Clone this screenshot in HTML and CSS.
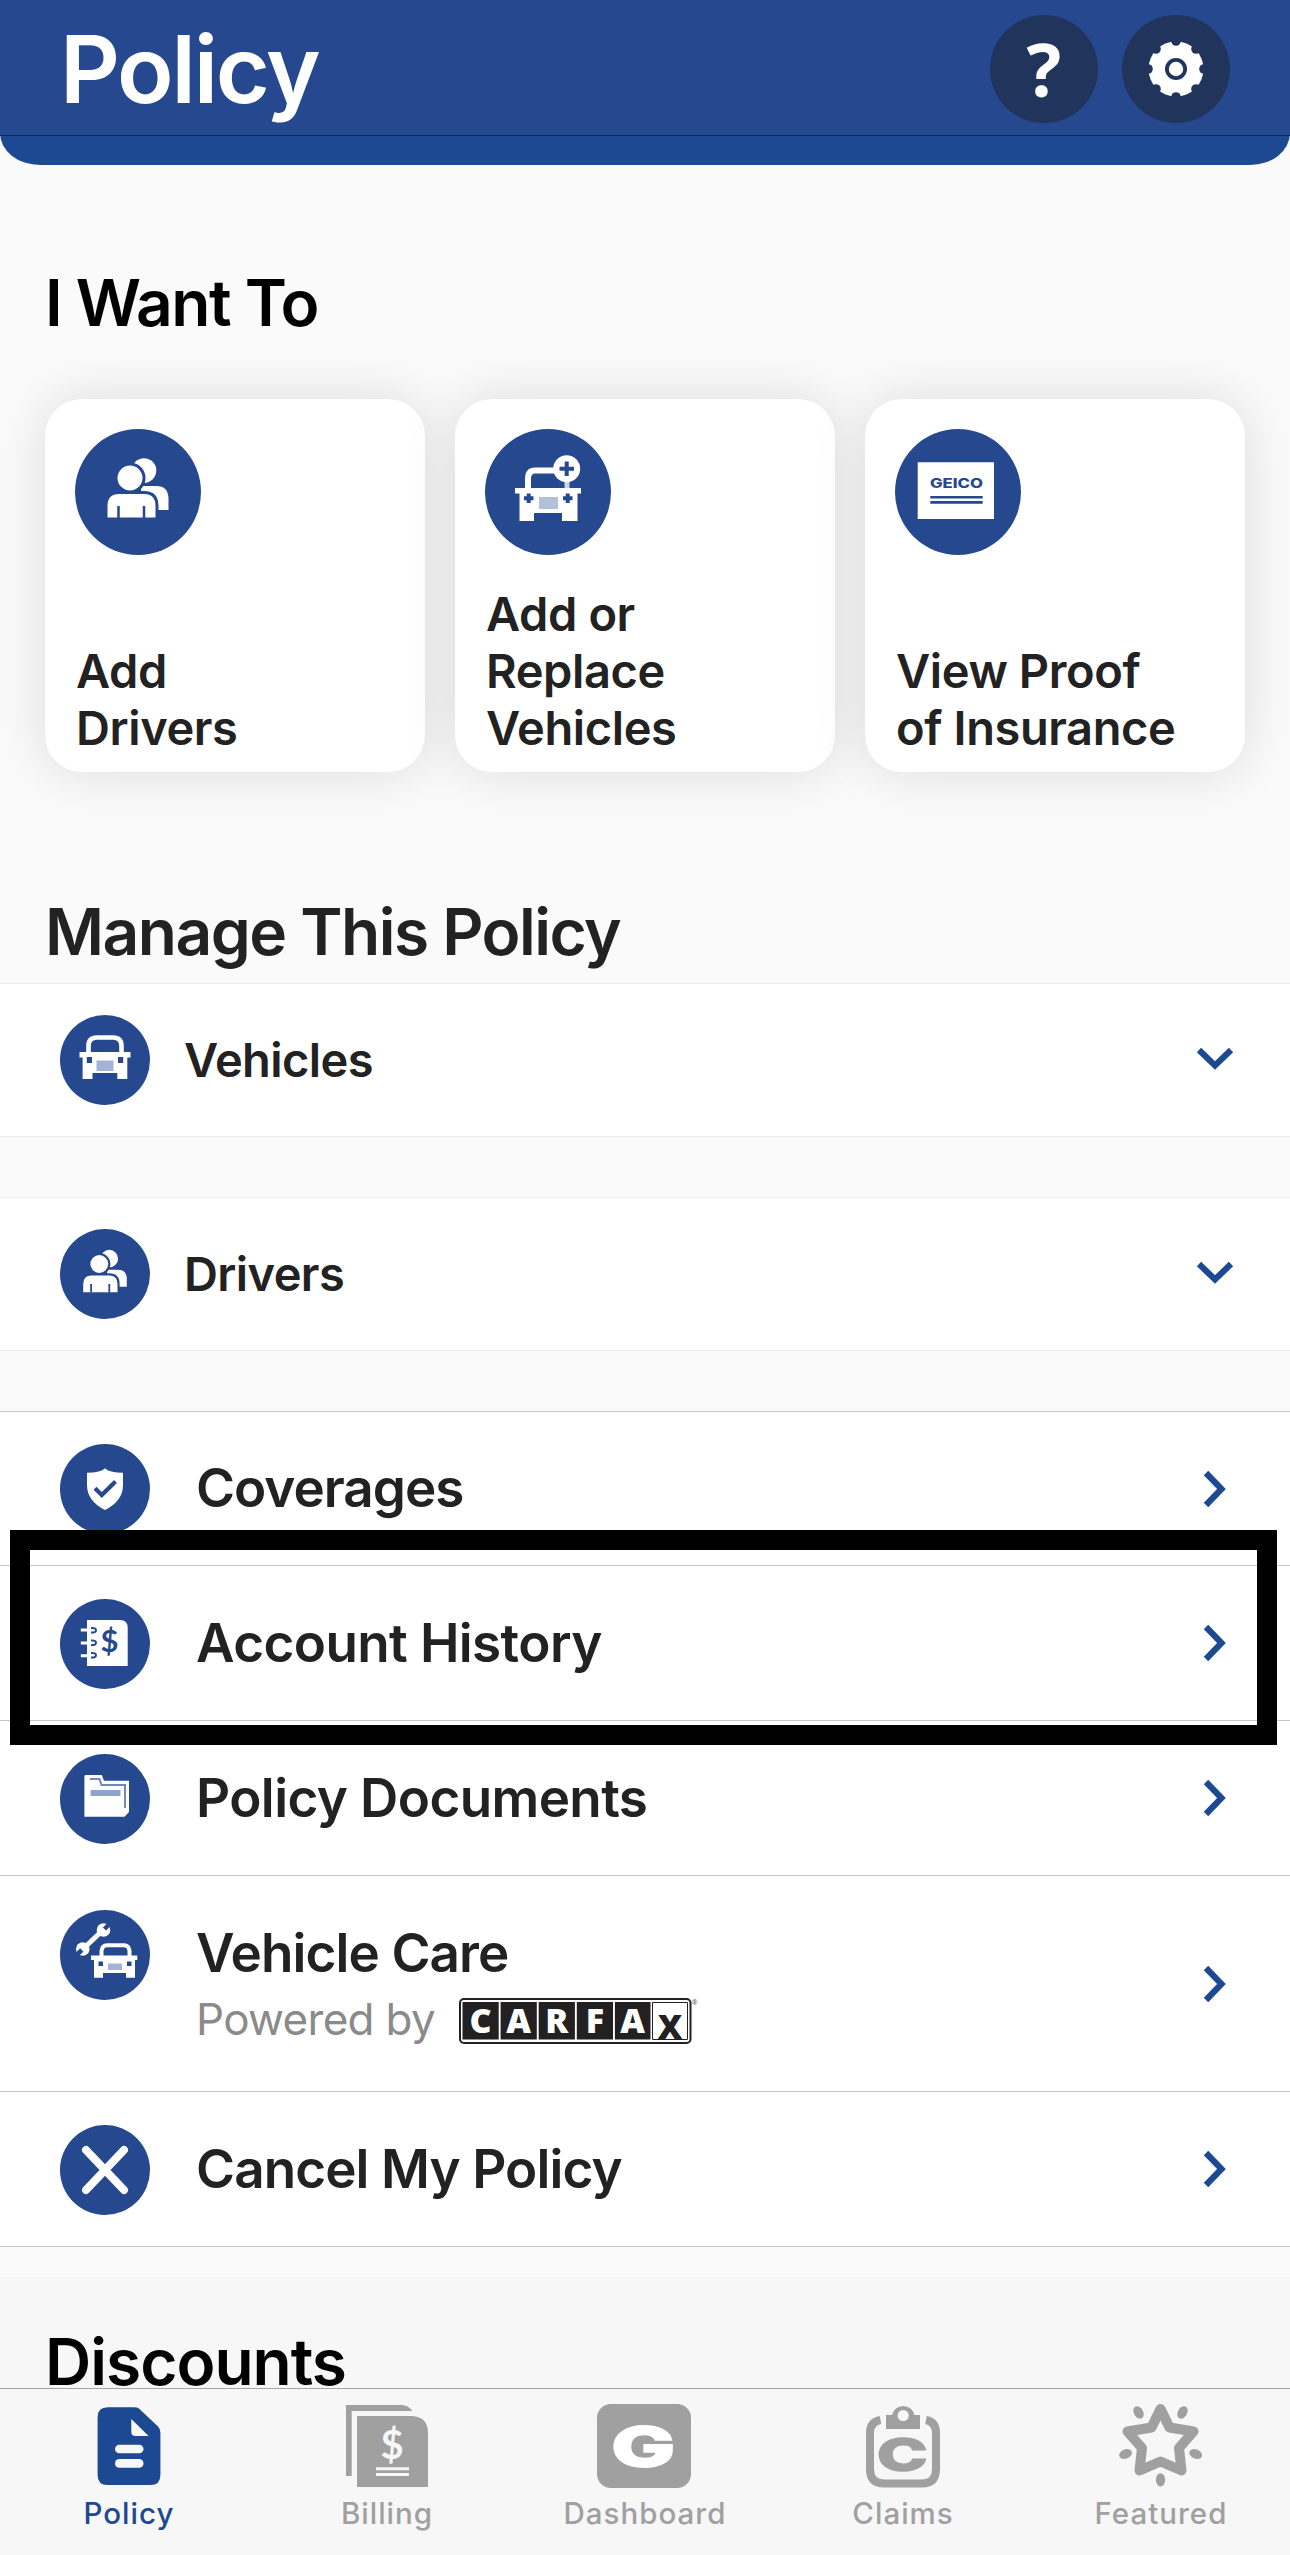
FILE: index.html
```html
<!DOCTYPE html>
<html lang="en">
<head>
<meta charset="utf-8">
<title>Policy</title>
<link rel="stylesheet" href="styles.css">
</head>
<body>
<svg class="defs" width="0" height="0" aria-hidden="true">
  <symbol id="people" viewBox="0 0 126 126">
    <circle cx="63" cy="63" r="63" fill="#25488e"/>
    <circle cx="69" cy="41.500" r="12.300" fill="#fff"/>
    <path d="M66 57H81Q93.500 57 93.500 70V81H66Z" fill="#fff"/>
    <circle cx="55" cy="49" r="14" fill="#fff" stroke="#25488e" stroke-width="3"/>
    <path d="M31 90V77Q31 63.500 44 63.500H69Q82 63.500 82 77V90Z" fill="#fff" stroke="#25488e" stroke-width="3"/>
    <path d="M43.500 77V89M69 77V89" stroke="#25488e" stroke-width="2.500"/>
  </symbol>
  <symbol id="chevron-down" viewBox="0 0 38 24"><path d="M3 3 19 18.500 35 3" fill="none" stroke="#1d4992" stroke-width="6.200"/></symbol>
  <symbol id="chevron-right" viewBox="0 0 24 38"><path d="M3 3 18.500 19 3 35" fill="none" stroke="#1d4992" stroke-width="6.200"/></symbol>
</svg>

<header class="header">
  <div class="header-bar">
    <h1 class="title">Policy</h1>
    <button class="round-button help" aria-label="Help">?</button>
    <button class="round-button" aria-label="Settings">
      <svg width="60" height="60" viewBox="-30 -30 60 60">
        <circle r="27.500" fill="#fff"/>
        <g fill="#20345c">
          <circle cx="28" r="4.800"/><circle cx="-28" r="4.800"/><circle cy="28" r="4.800"/><circle cy="-28" r="4.800"/>
          <circle cx="20" cy="20" r="4.800"/><circle cx="-20" cy="20" r="4.800"/><circle cx="20" cy="-20" r="4.800"/><circle cx="-20" cy="-20" r="4.800"/>
          <circle r="11"/>
        </g>
        <circle r="7.200" fill="#fff"/>
      </svg>
    </button>
  </div>
</header>

<main class="content">
  <h2 class="heading heading-want">I Want To</h2>
  <div class="cards">
    <a class="card">
      <svg width="126" height="126"><use href="#people"/></svg>
      <span class="card-label">Add<br>Drivers</span>
    </a>
    <a class="card">
      <svg width="126" height="126" viewBox="0 0 126 126">
        <circle cx="63" cy="63" r="63" fill="#25488e"/>
        <path d="M43 61V50Q43 41.500 50 41.500H69" fill="none" stroke="#fff" stroke-width="6"/>
        <path d="M82 52V60" stroke="#cdd6e8" stroke-width="5"/>
        <circle cx="81.700" cy="39.700" r="13.500" fill="#fff"/>
        <path d="M81.700 32.500V47M74.500 39.700H89" stroke="#25488e" stroke-width="4"/>
        <path d="M30 59H96V64.500H92.500V92H77V84H49V92H34.500V64.500H30Z" fill="#fff"/>
        <path d="M43.700 64.500V74M39 69.300H48.500M82.700 64.500V74M78 69.300H87.500" stroke="#25488e" stroke-width="4"/>
        <path d="M54 68H73V80H54Z" fill="#b3c0dc"/>
      </svg>
      <span class="card-label">Add or<br>Replace<br>Vehicles</span>
    </a>
    <a class="card">
      <svg width="126" height="126" viewBox="0 0 126 126">
        <circle cx="63" cy="63" r="63" fill="#25488e"/>
        <path d="M22.700 33.300H99V90H22.700Z" fill="#fff"/>
        <text class="geico" x="35" y="59.200" textLength="53" lengthAdjust="spacingAndGlyphs">GEICO</text>
        <path d="M35.300 68.300H87.700M35.300 73.400H87.700" stroke="#25488e" stroke-width="2.600"/>
      </svg>
      <span class="card-label">View Proof<br>of Insurance</span>
    </a>
  </div>

  <h2 class="heading heading-manage">Manage This Policy</h2>
  <div class="accordion">
    <svg width="90" height="90" viewBox="0 0 90 90">
      <circle cx="45" cy="45" r="45" fill="#25488e"/>
      <path d="M28.500 39V31Q28.500 22.500 37 22.500H53Q61.500 22.500 61.500 31V39" fill="none" stroke="#fff" stroke-width="4.600"/>
      <path d="M19.500 37H70.500V42.500H67.300V64H57.300V58H32.500V64H22.600V42.500H19.500Z" fill="#fff"/>
      <path d="M26.800 42H32V48H26.800ZM58 42H63.200V48H58Z" fill="#25488e"/>
      <path d="M36.500 45.500H53.500V56H36.500Z" fill="#a3b3d5"/>
    </svg>
    <span class="accordion-label">Vehicles</span>
    <svg width="38" height="24"><use href="#chevron-down"/></svg>
  </div>
  <div class="accordion">
    <svg width="90" height="90"><use href="#people"/></svg>
    <span class="accordion-label">Drivers</span>
    <svg width="38" height="24"><use href="#chevron-down"/></svg>
  </div>

  <div class="list">
    <a class="row row-first">
      <svg width="90" height="90" viewBox="0 0 90 90">
        <circle cx="45" cy="45" r="45" fill="#25488e"/>
        <path d="M45 24.300Q49 28.700 63 28.700V41Q63 57 45 66Q27 57 27 41V28.700Q41 28.700 45 24.300Z" fill="#fff"/>
        <path d="M35 44.300 41.800 51 55.500 37.500" fill="none" stroke="#25488e" stroke-width="4.200"/>
      </svg>
      <span class="row-label">Coverages</span>
      <svg width="24" height="38"><use href="#chevron-right"/></svg>
    </a>
    <a class="row row-marked">
      <svg width="90" height="90" viewBox="0 0 90 90">
        <circle cx="45" cy="45" r="45" fill="#25488e"/>
        <path d="M27 21H60Q67.700 21 67.700 29V67H27Z" fill="#fff"/>
        <path d="M20.800 31H29M20.800 44H29M20.800 56.700H29" stroke="#fff" stroke-width="3"/>
        <path d="M31 29Q36 28.500 36 31.200T31 33.500M31 41.500Q36 41 36 43.700T31 46M31 54Q36 53.500 36 56.200T31 58.500" fill="none" stroke="#25488e" stroke-width="2"/>
        <text class="dollar" x="49.500" y="53" font-size="31" fill="#25488e">$</text>
      </svg>
      <span class="row-label">Account History</span>
      <svg width="24" height="38"><use href="#chevron-right"/></svg>
    </a>
    <a class="row">
      <svg width="90" height="90" viewBox="0 0 90 90">
        <circle cx="45" cy="45" r="45" fill="#25488e"/>
        <path d="M24.400 22Q24.400 21 26 21H41.800L44 26.700H69V58L64.500 62.700H24.400Z" fill="#fff"/>
        <path d="M30 25H39.500L41.500 31H65V54" fill="none" stroke="#6f88be" stroke-width="2"/>
        <path d="M30.600 36H60.500V42H30.600Z" fill="#8fa3cf"/>
      </svg>
      <span class="row-label">Policy Documents</span>
      <svg width="24" height="38"><use href="#chevron-right"/></svg>
    </a>
    <a class="row row-care">
      <svg width="90" height="90" viewBox="0 0 90 90">
        <circle cx="45" cy="45" r="45" fill="#25488e"/>
        <path d="M23 39 43 20" stroke="#fff" stroke-width="5"/>
        <circle cx="43.500" cy="20" r="6.800" fill="#fff"/><circle cx="22.800" cy="39" r="6.800" fill="#fff"/>
        <path d="M44.500 19 51 12.500M21.800 40 15 46.500" stroke="#25488e" stroke-width="4.500"/>
        <path d="M41.500 47V41Q42 35.300 47 35.300H64Q69 35.300 69.500 41V47" fill="none" stroke="#fff" stroke-width="4"/>
        <path d="M31 45.500H77.300V50H75V67.700H66V63H43V67.700H34V50H31Z" fill="#fff"/>
        <path d="M38.500 51.500H43V56H38.500ZM67 51.500H71.500V56H67Z" fill="#25488e"/>
        <path d="M48 53.500H62V60H48Z" fill="#a3b3d5"/>
      </svg>
      <span class="row-text">
        <span class="row-label">Vehicle Care</span>
        <span class="row-sub"><span class="powered">Powered by</span>
          <svg class="carfax-logo" width="250" height="46" viewBox="0 0 250 46">
            <rect x="1" y="1" width="230.500" height="44" rx="4" fill="#fff" stroke="#222021" stroke-width="2"/>
            <path d="M3.500 4H39.700V41.500H3.500ZM41.600 4H77.800V41.500H41.600ZM79.700 4H115.900V41.500H79.700ZM117.800 4H154V41.500H117.800ZM155.900 4H191.500V41.500H155.900Z" fill="#222021"/>
            <path d="M193.500 4.500H228.500V41.500H193.500Z" fill="#fff" stroke="#222021"/>
            <g class="carfax"><text x="21.600" y="35">C</text><text x="59.700" y="35">A</text><text x="97.800" y="35">R</text><text x="136" y="35">F</text><text x="173.700" y="35">A</text><text class="carfax-x" x="211" y="41">X</text></g>
            <text x="233" y="7" font-size="7.500" font-family="Liberation Sans, sans-serif" fill="#333">®</text>
          </svg>
        </span>
      </span>
      <svg class="care-chevron" width="24" height="38"><use href="#chevron-right"/></svg>
    </a>
    <a class="row row-last">
      <svg width="90" height="90" viewBox="0 0 90 90">
        <circle cx="45" cy="45" r="45" fill="#25488e"/>
        <path d="M26 25 64 65M64 25 26 65" stroke="#fff" stroke-width="8" stroke-linecap="round"/>
      </svg>
      <span class="row-label">Cancel My Policy</span>
      <svg width="24" height="38"><use href="#chevron-right"/></svg>
    </a>
  </div>

  <section class="discounts"><h2 class="heading heading-discounts">Discounts</h2></section>
</main>

<nav class="tabs">
  <a class="tab tab-active">
    <svg width="84" height="84" viewBox="0 0 84 84">
      <path d="M20.600 3.300H48Q51 3.300 53 5.500L71 22.500Q73.400 25 73.400 28.500V71Q73.400 81 63.400 81H20.600Q10.600 81 10.600 71V13.300Q10.600 3.300 20.600 3.300Z" fill="#1d4992"/>
      <path d="M44.300 15 61.600 32H48.500Q44.300 32 44.300 28Z" fill="#f8f8f8"/>
      <rect x="28" y="40.700" width="28.500" height="8.600" rx="4.300" fill="#f8f8f8"/><rect x="28" y="55" width="28.500" height="8.800" rx="4.300" fill="#f8f8f8"/>
    </svg>
    <span>Policy</span>
  </a>
  <a class="tab">
    <svg width="84" height="84" viewBox="0 0 84 84">
      <path d="M1 1H57Q63 1 67.500 7H6.700V72H1Z" fill="#a0a0a0"/>
      <path d="M12 12H67Q83 13 83 29V83H12Z" fill="#a0a0a0"/>
      <text class="dollar" x="47.500" y="55" font-size="40" fill="#f7f7f7">$</text>
      <path d="M31 64.800H64M31 70.500H64" stroke="#f7f7f7" stroke-width="3"/>
    </svg>
    <span>Billing</span>
  </a>
  <a class="tab">
    <svg class="dashboard-icon" width="94" height="84" viewBox="0 0 94 84">
      <rect width="94" height="84" rx="14" fill="#a0a0a0"/>
      <text class="wide" x="14.500" y="61.500" font-size="54" fill="#fff" stroke="#fff" stroke-width="2" textLength="65" lengthAdjust="spacingAndGlyphs">G</text>
    </svg>
    <span>Dashboard</span>
  </a>
  <a class="tab">
    <svg width="84" height="84" viewBox="0 0 84 84">
      <path d="M19.500 16Q9 18 9 29V65Q9 79.500 23 79.500H61Q75 79.500 75 65V29Q75 18 65 16" fill="none" stroke="#a0a0a0" stroke-width="8"/>
      <path d="M25 11H31A11.500 11.500 0 0 1 53.500 11H59V25H25Z" fill="#a0a0a0"/>
      <circle cx="42.200" cy="11.500" r="5.600" fill="#f8f8f8"/>
      <text class="wide" x="16" y="67" font-size="45" fill="#a0a0a0" stroke="#a0a0a0" stroke-width="1.500" textLength="52" lengthAdjust="spacingAndGlyphs">C</text>
    </svg>
    <span>Claims</span>
  </a>
  <a class="tab">
    <svg width="84" height="84" viewBox="0 0 84 84">
      <path d="M41.500 5 50.500 23.500 74.500 27.500 60 44 62.500 66.500 41.500 57.500 20.500 66.500 23 44 8.500 27.500 32.500 23.500Z" fill="none" stroke="#a0a0a0" stroke-width="10" stroke-linejoin="round"/>
      <g fill="#a0a0a0">
        <ellipse cx="19.500" cy="8.500" rx="4.700" ry="6.600" transform="rotate(-30 19.500 8.500)"/>
        <ellipse cx="63.500" cy="8.500" rx="4.700" ry="6.600" transform="rotate(30 63.500 8.500)"/>
        <ellipse cx="6.600" cy="50" rx="6.600" ry="4.700" transform="rotate(-22 6.600 50)"/>
        <ellipse cx="76.700" cy="50" rx="6.600" ry="4.700" transform="rotate(22 76.700 50)"/>
        <ellipse cx="41.500" cy="75.800" rx="4.700" ry="6.600"/>
      </g>
    </svg>
    <span>Featured</span>
  </a>
</nav>
</body>
</html>
```
FILE: styles.css
```css
*, ::before, ::after { box-sizing: border-box; }

body {
  margin: 0;
  width: 1290px;
  height: 2555px;
  overflow: hidden;
  display: flex;
  flex-direction: column;
  background: #fafafa;
  color: #222;
  font-family: Inter, "Liberation Sans", sans-serif;
}

svg { display: block; flex: none; }
.defs { position: absolute; }

.header {
  height: 165px;
  flex: none;
  background: #1d4992;
  border-radius: 0 0 40px 40px / 0 0 32px 32px;
}

.header-bar {
  height: 136px;
  padding: 2px 60px 0;
  display: flex;
  align-items: center;
  gap: 24px;
  background: #25488e;
  border-bottom: 1px solid #0d2a5c;
}

.title {
  flex: 1;
  margin: 0;
  font-size: 93px;
  line-height: 110px;
  font-weight: 600;
  letter-spacing: -2.2px;
  color: #fff;
}

.round-button {
  width: 108px;
  height: 108px;
  padding: 0;
  border: 0;
  border-radius: 50%;
  display: flex;
  align-items: center;
  justify-content: center;
  background: #20345c;
  color: #fff;
}

.help {
  font: 700 73px/108px "Open Sans", sans-serif;
}

.content {
  flex: 1;
  min-height: 0;
  display: flex;
  flex-direction: column;
}

.heading {
  flex: none;
  margin: 0;
  padding-left: 45px;
  font-size: 64px;
  line-height: 76px;
  font-weight: 600;
  letter-spacing: -1.5px;
  white-space: nowrap;
}

.heading-want { margin-top: 100px; color: #000; }
.heading-manage { margin: 122px 0 13px; }

.cards {
  display: grid;
  grid-template-columns: repeat(3, 380px);
  gap: 30px;
  margin: 58px 45px 0;
}

.card {
  height: 373px;
  padding: 30px 30px 16px;
  display: flex;
  flex-direction: column;
  justify-content: space-between;
  border-radius: 37px;
  background: #fff;
  box-shadow: 0 0 54px rgba(0, 0, 0, 0.12);
}

.card-label {
  padding-left: 1px;
  font-size: 47px;
  line-height: 57px;
  font-weight: 600;
  letter-spacing: -0.4px;
  white-space: nowrap;
}

.geico {
  font: 800 13px Inter, sans-serif;
  fill: #25488e;
}

.accordion {
  flex: none;
  height: 154px;
  padding: 0 56px 0 60px;
  display: flex;
  align-items: center;
  background: #fff;
  border: solid #ebebeb;
  border-width: 1px 0;
}

.accordion > svg:last-child { margin-bottom: 3px; }

.accordion + .accordion { margin-top: 60px; }

.accordion-label {
  flex: 1;
  padding: 0 0 2px 34px;
  font-size: 47px;
  font-weight: 600;
  letter-spacing: -0.6px;
}

.list { flex: none; margin-top: 60px; }

.row {
  position: relative;
  height: 155px;
  padding: 0 63px 0 60px;
  display: flex;
  align-items: center;
  background: #fff;
  border-top: 1px solid #c6c6c6;
}

.row > svg:first-child { margin-top: 1px; }

.row-first { height: 154px; }
.row-last { height: 156px; border-bottom: 1px solid #c6c6c6; }

.row-marked::after {
  content: "";
  position: absolute;
  z-index: 1;
  top: -36px;
  left: 10px;
  width: 1267px;
  height: 215px;
  border: 20px solid #000;
}

.row-label {
  flex: 1;
  padding-left: 46px;
  font-size: 53px;
  line-height: 66px;
  font-weight: 600;
  letter-spacing: -0.6px;
  white-space: nowrap;
}

.row-first .row-label { padding-bottom: 1px; letter-spacing: -1px; }
.row-last .row-label,
.row-care .row-label { letter-spacing: -0.9px; }

.row-care {
  height: 216px;
  padding-top: 33px;
  align-items: flex-start;
}

.row-text {
  flex: 1;
  display: flex;
  flex-direction: column;
  padding-top: 11px;
}

.row-sub {
  display: flex;
  align-items: center;
  padding-left: 46px;
  height: 66px;
}

.powered {
  width: 263px;
  font-size: 44px;
  line-height: 66px;
  letter-spacing: -0.7px;
  color: #8a8a8a;
  white-space: nowrap;
}

.carfax-logo { margin-top: 4px; overflow: visible; }

.care-chevron { margin-top: 56px; }

.carfax {
  font: 800 34px "Open Sans", sans-serif;
  text-anchor: middle;
  fill: #fff;
}

.carfax-x { fill: #222021; }

.dollar {
  font-family: Lato, sans-serif;
  font-weight: 700;
  text-anchor: middle;
}

.wide { font-family: Inter, sans-serif; font-weight: 800; }

.discounts {
  flex: 1;
  margin-top: 30px;
  padding-top: 59px;
  background: #f7f7f7;
}

.heading-discounts {
  line-height: 52px;
  letter-spacing: -1px;
  color: #000;
}

.tabs {
  flex: none;
  height: 167px;
  padding-top: 15px;
  display: grid;
  grid-template-columns: repeat(5, 1fr);
  background: #f7f7f7;
  border-top: 1px solid #a6a6a6;
}

.tab {
  display: flex;
  flex-direction: column;
  align-items: center;
  gap: 7px;
  color: #a0a0a0;
  font-size: 29.5px;
  line-height: 36px;
  font-weight: 500;
  letter-spacing: 1px;
}

.tab-active { color: #1d4992; }

.dashboard-icon { margin-right: 2px; }
```
